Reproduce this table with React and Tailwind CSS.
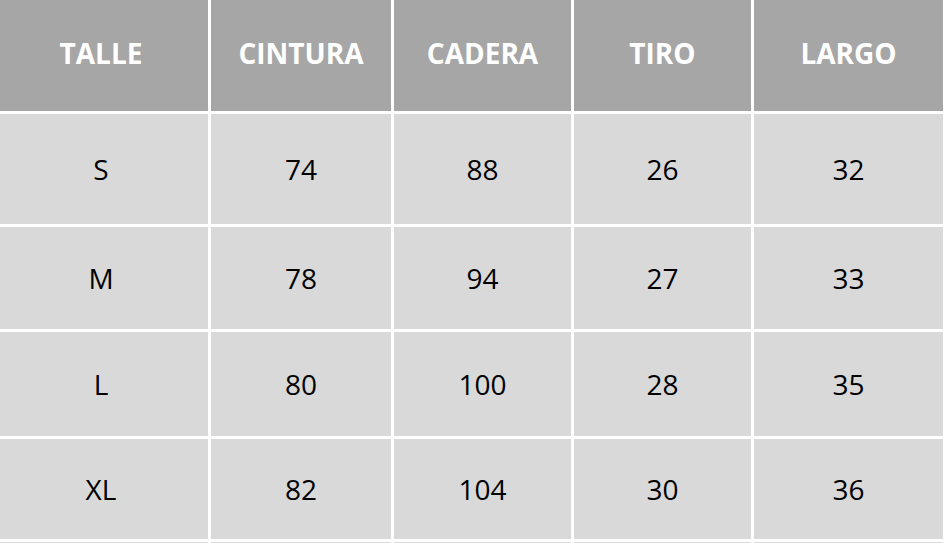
import React from 'react';

const headers = ['TALLE', 'CINTURA', 'CADERA', 'TIRO', 'LARGO'];

const rows = [
  { h: 'h-[110px]', cells: ['S', '74', '88', '26', '32'] },
  { h: 'h-[102px]', cells: ['M', '78', '94', '27', '33'] },
  { h: 'h-[104px]', cells: ['L', '80', '100', '28', '35'] },
  { h: 'h-[100px]', cells: ['XL', '82', '104', '30', '36'] },
];

export default function App() {
  return (
    <div className="w-[945px] h-[543px] overflow-hidden bg-white" style={{ fontFamily: '"Open Sans", sans-serif' }}>
      <div className="grid w-[943px] grid-cols-[208px_180px_177px_177px_189px] gap-[3px]">
        {headers.map((h, i) => (
          <div
            key={h}
            className={`h-[111px] pb-[5px] flex items-center justify-center bg-[#a6a6a6] text-white font-bold text-[28px] ${i === 0 ? 'pr-[6px]' : ''}`}
          >
            {h}
          </div>
        ))}
        {rows.map((row) =>
          row.cells.map((c, i) => (
            <div
              key={row.cells[0] + i}
              className={`${row.h} flex items-center justify-center bg-[#d9d9d9] text-black text-[28px] ${i === 0 ? 'pr-[6px]' : ''}`}
            >
              {c}
            </div>
          ))
        )}
        {headers.map((h) => (
          <div key={'tail-' + h} className="h-[40px] bg-[#d9d9d9]" />
        ))}
      </div>
    </div>
  );
}
